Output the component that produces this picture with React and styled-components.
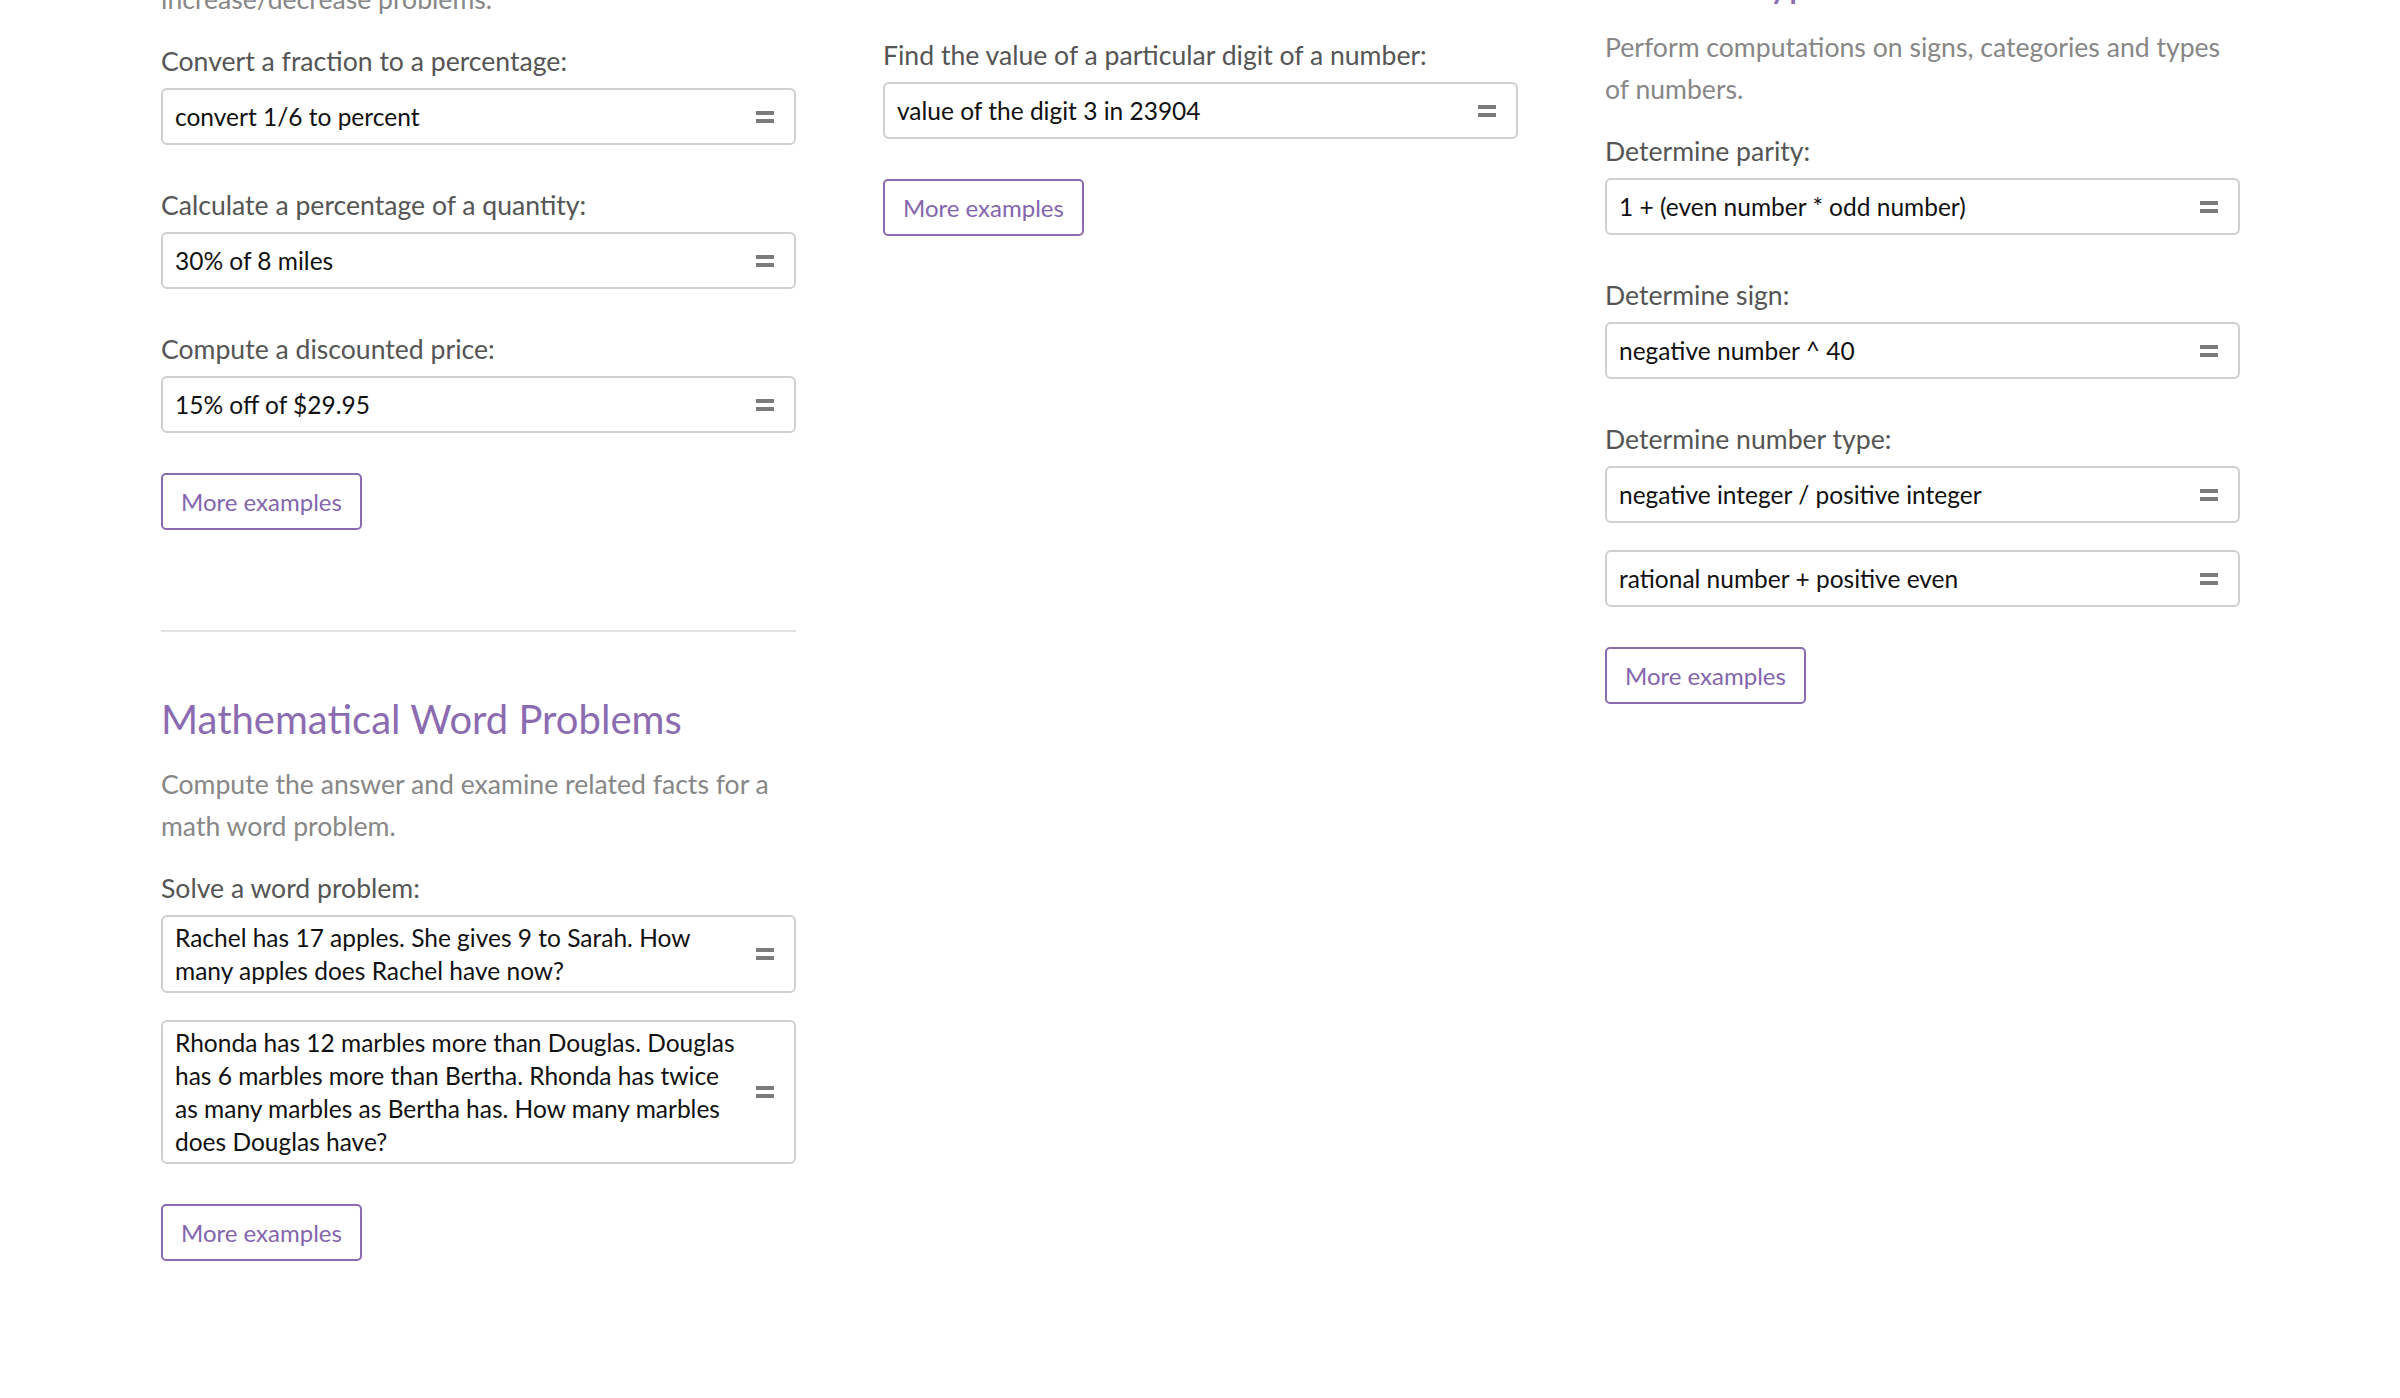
import React from 'react'
import styled, { createGlobalStyle } from 'styled-components'

const GlobalStyle = createGlobalStyle`
  body {
    margin: 0;
    background: #ffffff;
    font-family: Lato, "Noto Sans", "Liberation Sans", sans-serif;
  }
`

function EqualsIcon() {
  return (
    <Icon viewBox="0 0 18 12" aria-hidden="true">
      <rect x="0" y="0" width="18" height="4" fill="#7b7b7b" />
      <rect x="0" y="8" width="18" height="4" fill="#7b7b7b" />
    </Icon>
  )
}

// a query is either a string or a list of lines (long word problems)
function QueryBox({ query }) {
  const lines = Array.isArray(query) ? query : [query]
  return (
    <Query>
      <QueryText>
        {lines.map((line, i) => (
          <React.Fragment key={i}>
            {i > 0 && <br />}
            {line}
          </React.Fragment>
        ))}
      </QueryText>
      <EqualsIcon />
    </Query>
  )
}

function Example({ label, queries }) {
  return (
    <Group>
      <Label>{label}</Label>
      <Queries>
        {queries.map((q, i) => (
          <QueryBox key={i} query={q} />
        ))}
      </Queries>
    </Group>
  )
}

export default function App() {
  return (
    <>
      <GlobalStyle />
      <Page>
        <Column $offset={-22}>
          <Desc>increase/decrease problems.</Desc>
          <Example label="Convert a fraction to a percentage:" queries={['convert 1/6 to percent']} />
          <Example label="Calculate a percentage of a quantity:" queries={['30% of 8 miles']} />
          <Example label="Compute a discounted price:" queries={['15% off of $29.95']} />
          <MoreButton>More examples</MoreButton>
          <Divider />
          <Heading>Mathematical Word Problems</Heading>
          <Desc>Compute the answer and examine related facts for a math word problem.</Desc>
          <Example
            label="Solve a word problem:"
            queries={[
              ['Rachel has 17 apples. She gives 9 to Sarah. How', 'many apples does Rachel have now?'],
              [
                'Rhonda has 12 marbles more than Douglas. Douglas',
                'has 6 marbles more than Bertha. Rhonda has twice',
                'as many marbles as Bertha has. How many marbles',
                'does Douglas have?',
              ],
            ]}
          />
          <MoreButton>More examples</MoreButton>
        </Column>

        <Column $offset={35}>
          <Example label="Find the value of a particular digit of a number:" queries={['value of the digit 3 in 23904']} />
          <MoreButton>More examples</MoreButton>
        </Column>

        <Column $offset={-43}>
          <Heading $tight>Number Types</Heading>
          <Desc>Perform computations on signs, categories and types of numbers.</Desc>
          <Example label="Determine parity:" queries={['1 + (even number * odd number)']} />
          <Example label="Determine sign:" queries={['negative number ^ 40']} />
          <Example
            label="Determine number type:"
            queries={['negative integer / positive integer', 'rational number + positive even']}
          />
          <MoreButton>More examples</MoreButton>
        </Column>
      </Page>
    </>
  )
}

const Page = styled.div`
  height: 1398px;
  overflow: hidden;
  display: grid;
  grid-template-columns: repeat(3, 635px);
  column-gap: 87px;
  padding-left: 161px;
  align-items: start;
  box-sizing: border-box;
`

const Column = styled.div`
  display: flex;
  flex-direction: column;
  align-items: flex-start;
  margin-top: ${(p) => p.$offset}px;
`

const Heading = styled.h2`
  margin: 0;
  height: 50px;
  line-height: 50px;
  font-size: 40px;
  font-weight: 400;
  letter-spacing: ${(p) => (p.$tight ? '-1px' : '0')};
  color: #8c6cb1;
  white-space: nowrap;
`

const Desc = styled.p`
  margin: 0 0 21px;
  width: 100%;
  font-size: 26.6px;
  line-height: 42px;
  color: #878787;
  ${Heading} + & {
    margin-top: 19px;
  }
`

const Group = styled.div`
  width: 100%;
  margin-bottom: 40px;
`

const Label = styled.div`
  height: 40px;
  line-height: 40px;
  margin-bottom: 7px;
  font-size: 26.6px;
  color: #555555;
  white-space: nowrap;
`

const Queries = styled.div`
  display: flex;
  flex-direction: column;
  gap: 27px;
`

const Query = styled.div`
  box-sizing: border-box;
  min-height: 57px;
  padding: 4px 20px 4px 12px;
  border: 2px solid #cfcfcf;
  border-radius: 6px;
  background: #ffffff;
  display: flex;
  align-items: center;
  gap: 12px;
`

const QueryText = styled.div`
  flex: 1;
  font-size: 24.5px;
  line-height: 33px;
  color: #111111;
`

const Icon = styled.svg`
  width: 18px;
  height: 12px;
  flex-shrink: 0;
`

const MoreButton = styled.button`
  box-sizing: border-box;
  height: 57px;
  padding: 0 18px;
  border: 2px solid #8c6cb1;
  border-radius: 5px;
  background: #ffffff;
  font-family: inherit;
  font-size: 24px;
  color: #8466ad;
  cursor: pointer;
`

const Divider = styled.hr`
  width: 100%;
  margin: 100px 0 62px;
  border: none;
  border-top: 2px solid #e2e2e2;
`
